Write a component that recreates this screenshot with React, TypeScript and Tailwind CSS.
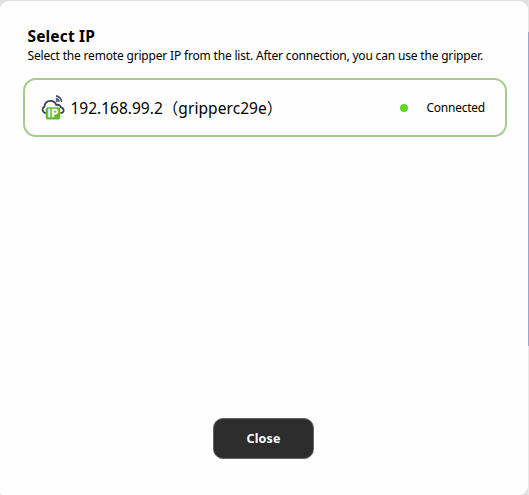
function CloudIpIcon() {
  return (
    <svg width="26" height="26" viewBox="0 0 26 26" fill="none" className="shrink-0">
      <path
        d="M5.6 17.8H4.7A3.4 3.4 0 0 1 4.4 11.6C5 7.6 7.7 5.8 10.8 5.9C13.5 6 15.4 7.6 16.3 10C18.3 9.3 20.2 10.3 20.7 12.2C24.2 13.2 24.5 16.7 22.2 17.8H21"
        stroke="#34405d"
        strokeWidth="1.8"
        strokeLinecap="round"
      />
      <path d="M16 .9A7 7 0 0 1 21.6 7M15.8 3.6A4 4 0 0 1 19 7" stroke="#46526d" strokeWidth="1.6" />
      <circle cx="16.7" cy="6.2" r="1" fill="#46526d" />
      <rect x="5.7" y="12.2" width="14.5" height="12.4" rx="2.2" fill="#65b72f" />
      <text
        x="13.4"
        y="22"
        textAnchor="middle"
        fontFamily="Liberation Sans"
        fontSize="10"
        fontWeight="700"
        letterSpacing="0.8"
        fill="#fff"
        stroke="#fff"
        strokeWidth="0.35"
      >
        IP
      </text>
    </svg>
  );
}

export default function App() {
  return (
    <div className="flex h-[495px] w-[529px] bg-[#e1e1e1] pt-px font-['Noto_Sans','Noto_Sans_CJK_SC',sans-serif] text-black">
      <main className="flex w-[528px] flex-col rounded-t-[9px] rounded-br-[9px] rounded-bl-[3px] bg-[#fefefe] pt-[24px] pr-[21px] pl-[23px]">
        <h1 className="ml-[4.5px] h-[22px] whitespace-nowrap text-[15.5px] leading-[23px] font-bold tracking-[0.15px]">Select IP</h1>
        <p className="ml-[4.5px] h-[31px] whitespace-nowrap text-[12px] leading-[18px] tracking-[-0.182px]">
          Select the remote gripper IP from the list. After connection, you can use the gripper.
        </p>
        <div className="flex h-[59px] shrink-0 items-center rounded-[13px] border-2 border-[#a3cd88] pr-[20px] pl-[15px]">
          <CloudIpIcon />
          <span className="ml-[4.5px] whitespace-nowrap text-[15.5px] leading-[20px]">192.168.99.2</span>
          <span className="whitespace-nowrap text-[15.5px] leading-[20px] tracking-[0.07px]">（gripperc29e）</span>
          <span className="ml-auto size-2 rounded-full bg-[#62d526]" />
          <span className="ml-[18px] whitespace-nowrap text-[12px] leading-[18px] tracking-[-0.24px]">Connected</span>
        </div>
        <button className="mt-[281px] ml-[190px] h-[41px] w-[101px] shrink-0 rounded-[10px] border border-[#656565] bg-[#2d2d2d] pt-[2px] text-[12.5px] font-bold tracking-[0.15px] text-white">
          Close
        </button>
      </main>
      <div className="-mt-px flex w-px flex-col">
        <div className="h-[32px] bg-[#e4e4e4]" />
        <div className="h-[314px] bg-[#9ba6cf]" />
        <div className="flex-1 bg-[#e7e7e7]" />
      </div>
    </div>
  );
}
